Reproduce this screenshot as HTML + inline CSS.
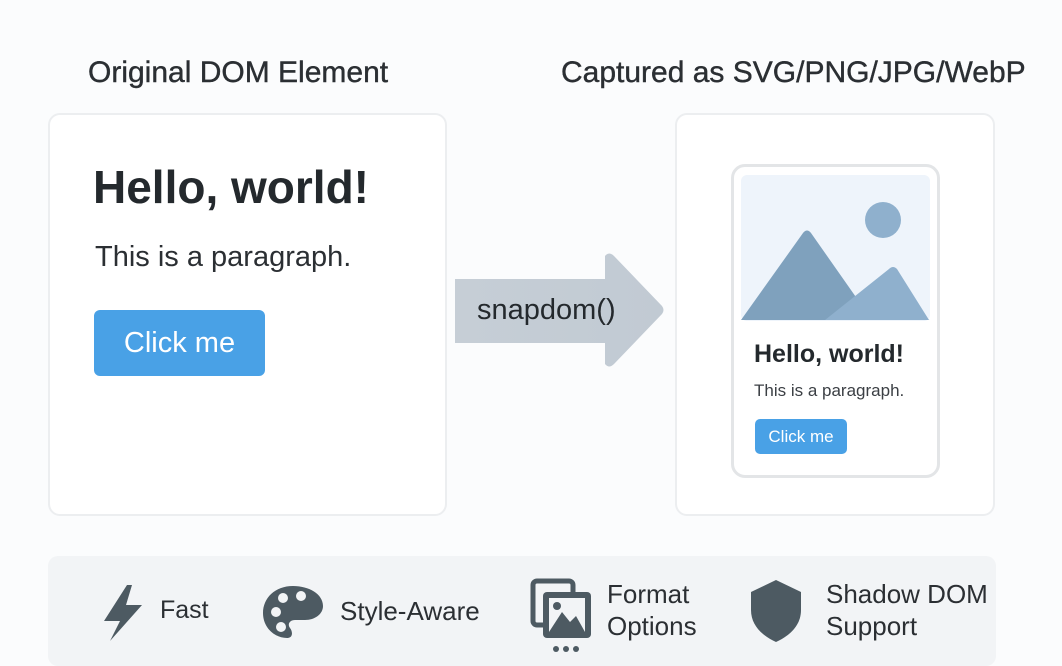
<!DOCTYPE html>
<html><head><meta charset="utf-8"><style>
*{margin:0;padding:0;box-sizing:border-box}
body{width:1062px;height:658px;background:#fbfcfd;font-family:"Liberation Sans",sans-serif;position:relative;overflow:hidden;color:#2b2f33}
.a{position:absolute}
.card{position:absolute;background:#fff;border:2px solid #eceef0;border-radius:12px}
</style></head><body>
<div class="a" style="left:88px;top:56px;font-size:30px;color:#2b2f33;-webkit-text-stroke:0.4px #2b2f33">Original DOM Element</div>
<div class="a" style="left:561px;top:56px;font-size:30px;color:#2b2f33;-webkit-text-stroke:0.4px #2b2f33">Captured as SVG/PNG/JPG/WebP</div>
<div class="card" style="left:48px;top:113px;width:399px;height:403px"></div>
<div class="a" style="left:93px;top:160px;font-size:46px;font-weight:bold;color:#24292d">Hello, world!</div>
<div class="a" style="left:95px;top:241px;font-size:29px;color:#2b2f33">This is a paragraph.</div>
<div class="a" style="left:94px;top:310px;width:171px;height:66px;background:#49a1e6;border-radius:6px;color:#fff;font-size:29px;line-height:66px;text-align:center;font-weight:500">Click me</div>
<svg class="a" style="left:450px;top:250px" width="220" height="122"><defs><linearGradient id="g" x1="0" x2="1"><stop offset="0" stop-color="#c6ced6"/><stop offset="1" stop-color="#c1cad3"/></linearGradient></defs><path d="M5 29H155V6Q159 1 164 6L212 56Q215 60 212 64L164 114Q159 119 155 114V93H5Z" fill="url(#g)"/></svg>
<div class="a" style="left:477px;top:294px;font-size:29px;color:#24292d">snapdom()</div>
<div class="card" style="left:675px;top:113px;width:320px;height:403px"></div>
<div class="a" style="left:731px;top:164px;width:209px;height:314px;border:3px solid #e3e5e7;border-radius:14px;background:#fff"></div>
<svg class="a" style="left:741px;top:175px" width="189" height="146"><rect width="189" height="146" rx="6" fill="#eef4fb"/><circle cx="142" cy="45" r="18" fill="#8fb0cd"/><path d="M0 145L62 58Q66 53 70 58L124 135 L189 145Z" fill="#7fa1bd"/><path d="M84 145L148 94Q152 90 156 94L188 145Z" fill="#8fb0cd"/></svg>
<div class="a" style="left:754px;top:340px;font-size:25px;font-weight:bold;color:#24292d">Hello, world!</div>
<div class="a" style="left:754px;top:381px;font-size:17px;color:#3b3f44">This is a paragraph.</div>
<div class="a" style="left:755px;top:419px;width:92px;height:35px;background:#49a1e6;border-radius:5px;color:#fff;font-size:17px;line-height:35px;text-align:center">Click me</div>
<div class="a" style="left:48px;top:556px;width:948px;height:110px;background:#f2f4f6;border-radius:10px"></div>
<svg class="a" style="left:100px;top:583px" width="46" height="60"><path d="M27 2L4 38H20L10 58L42 22H26L32 2Z" fill="#4d5a62"/></svg>
<div class="a" style="left:160px;top:596px;font-size:25px;color:#2b2f33">Fast</div>
<svg class="a" style="left:261px;top:584px" width="64" height="56"><path d="M32 2C14 2 2 14 2 29C2 44 14 54 26 54C32 54 32 48 29 44C26 40 29 36 34 36H44C54 36 62 30 62 22C62 10 48 2 32 2Z" fill="#4d5a62"/><circle cx="15" cy="28" r="5" fill="#f2f4f6"/><circle cx="22" cy="14" r="5" fill="#f2f4f6"/><circle cx="40" cy="12" r="5" fill="#f2f4f6"/><circle cx="20" cy="43" r="5" fill="#f2f4f6"/></svg>
<div class="a" style="left:340px;top:596px;font-size:26px;color:#2b2f33">Style-Aware</div>
<svg class="a" style="left:530px;top:578px" width="66" height="76"><rect x="3" y="3" width="40" height="44" rx="4" fill="none" stroke="#4d5a62" stroke-width="5"/><rect x="13" y="14" width="48" height="46" rx="4" fill="#4d5a62"/><rect x="19" y="20" width="36" height="34" fill="#f2f4f6"/><path d="M19 54L32 34L40 44L46 38L55 54Z" fill="#4d5a62"/><circle cx="27" cy="28" r="4" fill="#4d5a62"/><circle cx="26" cy="71" r="3" fill="#4d5a62"/><circle cx="36" cy="71" r="3" fill="#4d5a62"/><circle cx="46" cy="71" r="3" fill="#4d5a62"/></svg>
<div class="a" style="left:607px;top:578px;font-size:26px;line-height:32px;color:#2b2f33">Format<br>Options</div>
<svg class="a" style="left:747px;top:578px" width="58" height="66"><path d="M29 2L54 14V32C54 48 42 58 29 64C16 58 4 48 4 32V14Z" fill="#4d5a62"/></svg>
<div class="a" style="left:826px;top:578px;font-size:26px;line-height:32px;color:#2b2f33">Shadow DOM<br>Support</div>
</body></html>
